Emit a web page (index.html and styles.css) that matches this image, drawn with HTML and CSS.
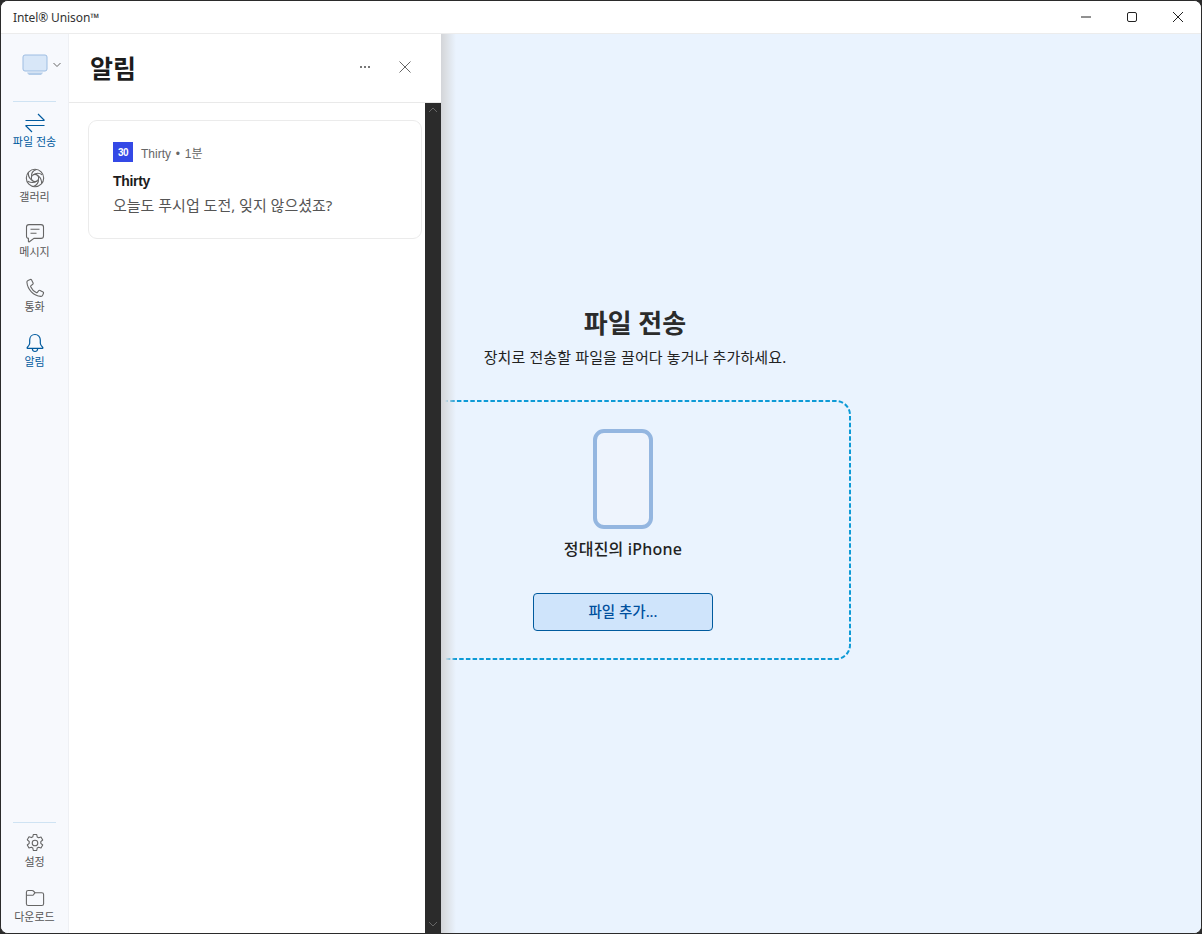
FILE: index.html
```html
<!DOCTYPE html>
<html lang="ko">
<head>
    <meta charset="UTF-8">
    <title>Intel® Unison™</title>
    <link rel="stylesheet" href="styles.css">
</head>
<body>
    <div class="window">
        <div class="titlebar">
            <span class="app-name">Intel® Unison™</span>
            <div class="win-controls">
                <button class="win-btn"><svg width="12" height="12" viewBox="0 0 12 12"><path d="M1 6h10" stroke="#222" fill="none"/></svg></button>
                <button class="win-btn"><svg width="12" height="12" viewBox="0 0 12 12"><rect x="1.5" y="1.5" width="9" height="9" rx="1.5" stroke="#222" fill="none"/></svg></button>
                <button class="win-btn"><svg width="12" height="12" viewBox="0 0 12 12"><path d="M1 1l10 10M11 1L1 11" stroke="#222" fill="none"/></svg></button>
            </div>
        </div>
        <div class="app-body">
            <nav class="rail">
                <div class="device-switch">
                    <svg width="26" height="22" viewBox="0 0 26 22">
                        <rect x="1" y="1" width="24" height="16" rx="2" fill="#d8e7f8" stroke="#9dbde2"/>
                        <path d="M5 18.500h16c-1 2-2 2.500-3 2.500H8c-1 0-2-.5-3-2.500z" fill="#b4cde9"/>
                    </svg>
                    <svg width="8" height="6" viewBox="0 0 8 6"><path d="M.5 1l3.500 3.500L7.500 1" stroke="#666" fill="none"/></svg>
                </div>
                <div class="rail-main">
                    <a class="rail-item active">
                        <svg width="22" height="20" viewBox="0 0 22 20" fill="none" stroke="#005a9e" stroke-width="1.200"><path d="M1.500 7.500h19M14 1l6.500 6.500M20.500 12.500h-19M8 19l-6.500-6.500"/></svg>
                        <span>파일 전송</span>
                    </a>
                    <a class="rail-item">
                        <svg width="20" height="20" viewBox="0 0 20 20" fill="none" stroke="#666" stroke-width="1.100"><circle cx="10" cy="10" r="8.700"/><circle cx="10" cy="10" r="3.600"/><path d="M6.500 9.200C6 5.500 8 2.500 11.500 1.400M8 6.900c3-2 6.500-2 9.200-.2M11.800 6.900c3 1.300 4.800 4.500 4.900 8.500M13.500 10.800c.2 3.600-1.800 6.500-5 7.800M12 13c-3 2-6.500 1.800-9.200.1M8.200 13.100c-3.200-1.400-5-4.300-5-8.500"/></svg>
                        <span>갤러리</span>
                    </a>
                    <a class="rail-item">
                        <svg width="20" height="20" viewBox="0 0 20 20" fill="none" stroke="#666" stroke-width="1.100"><path d="M4 1.600h12A2.500 2.500 0 0 1 18.500 4.100v8.800a2.500 2.500 0 0 1-2.500 2.500H9L4.400 18.800c-.5.300-1-.1-1-.6v-2.900A2 2 0 0 1 1.500 13V4.100A2.500 2.500 0 0 1 4 1.600z"/><path d="M5.500 6.300h9M5.500 10.300h6"/></svg>
                        <span>메시지</span>
                    </a>
                    <a class="rail-item">
                        <svg width="20" height="20" viewBox="0 0 20 20" fill="none" stroke="#666" stroke-width="1.100"><path d="M3 2.400 5.300 1.500c.5-.2 1 0 1.300.5l1.500 3c.2.500.1 1-.3 1.300L6 7.600c-.4.300-.5.800-.3 1.200 1.100 2.500 3 4.500 5.500 5.700.4.200.9.100 1.200-.2l1.300-1.600c.4-.4.900-.5 1.400-.3l2.900 1.500c.5.300.7.800.5 1.300l-.9 2.200c-.3.700-1 1.100-1.800 1C8.500 17.700 2.600 11.500 1.900 4.200 1.800 3.400 2.300 2.700 3 2.400z"/></svg>
                        <span>통화</span>
                    </a>
                    <a class="rail-item active">
                        <svg width="20" height="20" viewBox="0 0 20 20" fill="none" stroke="#005a9e" stroke-width="1.200"><path d="M10 1.500c-3.200 0-5.300 2.400-5.300 5.400v3.300c0 1.500-1.500 3.200-2.500 4.300-.3.300-.1.800.3.800h15c.4 0 .6-.5.300-.8-1-1.100-2.500-2.800-2.500-4.300V6.900c0-3-2.100-5.400-5.300-5.400z"/><path d="M7.300 15.800c.2 1.600 1.300 2.700 2.700 2.700s2.500-1.100 2.700-2.700"/></svg>
                        <span>알림</span>
                    </a>
                </div>
                <div class="rail-bottom">
                    <a class="rail-item">
                        <svg width="20" height="20" viewBox="0 0 20 20" fill="none" stroke="#666" stroke-width="1.100"><circle cx="10" cy="10" r="2.800"/><path d="M8.300 1.500h3.400l.5 2.500 1.400.8 2.400-.8 1.700 3-1.900 1.700v1.600l1.900 1.700-1.700 3-2.400-.8-1.400.8-.5 2.500H8.300l-.5-2.500-1.400-.8-2.400.8-1.700-3 1.900-1.700V8.500L2.300 6.800l1.700-3 2.400.8 1.400-.8z" stroke-linejoin="round"/></svg>
                        <span>설정</span>
                    </a>
                    <a class="rail-item">
                        <svg width="20" height="20" viewBox="0 0 20 20" fill="none" stroke="#666" stroke-width="1.100"><path d="M3.200 2.500h4c.5 0 .9.200 1.200.5L10 4.700h6.800c1 0 1.800.8 1.800 1.800v9.200c0 1-.8 1.800-1.800 1.800H3.200c-1 0-1.800-.8-1.800-1.800V4.300c0-1 .8-1.800 1.800-1.800z"/><path d="M1.400 7.300h5.800c.5 0 .9-.2 1.200-.5L10 4.700"/></svg>
                        <span>다운로드</span>
                    </a>
                </div>
            </nav>
            <div class="content">
                <main class="transfer">
                    <h1 class="transfer-title">파일 전송</h1>
                    <p class="transfer-sub">장치로 전송할 파일을 끌어다 놓거나 추가하세요.</p>
                    <div class="dropzone">
                        <svg class="dropzone-line" width="456" height="260" viewBox="0 0 456 260"><rect x="1" y="1" width="454" height="258" rx="14" fill="none" stroke="#0d9ad6" stroke-width="2" stroke-dasharray="4.500 2.200"/></svg>
                        <div class="phone"></div>
                        <div class="phone-name">정대진의 iPhone</div>
                        <button class="add-file">파일 추가...</button>
                    </div>
                </main>
                <aside class="panel">
                    <header class="panel-head">
                        <h2>알림</h2>
                        <div class="panel-actions">
                            <svg width="12" height="4" viewBox="0 0 12 4"><g fill="#777"><rect x="1" y="1" width="2" height="2"/><rect x="5" y="1" width="2" height="2"/><rect x="9" y="1" width="2" height="2"/></g></svg>
                            <svg width="12" height="12" viewBox="0 0 12 12"><path d="M.5.500l11 11M11.500.500l-11 11" stroke="#666" fill="none"/></svg>
                        </div>
                    </header>
                    <div class="panel-body">
                        <div class="panel-list">
                            <article class="card">
                                <div class="card-app">
                                    <span class="app-logo">30</span>
                                    <span>Thirty • 1분</span>
                                </div>
                                <div class="card-title">Thirty</div>
                                <div class="card-text">오늘도 푸시업 도전, 잊지 않으셨죠?</div>
                            </article>
                        </div>
                        <div class="scrollbar">
                            <svg width="10" height="6" viewBox="0 0 10 6"><path d="M1 5l4-4 4 4" stroke="#666" fill="none"/></svg>
                            <svg width="10" height="6" viewBox="0 0 10 6"><path d="M1 1l4 4 4-4" stroke="#666" fill="none"/></svg>
                        </div>
                    </div>
                </aside>
            </div>
        </div>
    </div>
</body>
</html>
```

FILE: styles.css
```css
html, body {
    height: 100%;
    margin: 0;
    background: #2b2b2b;
}
body {
    font-family: "Noto Sans", "Noto Sans CJK KR", sans-serif;
    color: #1f1f1f;
    overflow: hidden;
}
.window {
    box-sizing: border-box;
    height: 934px;
    border: 1px solid #2b2b2b;
    border-radius: 8px;
    overflow: hidden;
    background: #fff;
    display: flex;
    flex-direction: column;
}
.titlebar {
    height: 32px;
    flex: none;
    display: flex;
    align-items: center;
    justify-content: space-between;
    border-bottom: 1px solid #ececec;
    background: #fff;
}
.app-name {
    font-size: 12px;
    margin-left: 12px;
    color: #333;
    letter-spacing: -.1px;
}
.win-controls {
    display: flex;
    height: 100%;
}
.win-btn {
    width: 46px;
    border: none;
    background: none;
    padding: 0;
    display: flex;
    align-items: center;
    justify-content: center;
}
.app-body {
    flex: 1;
    display: flex;
    min-height: 0;
}
.rail {
    width: 67px;
    flex: none;
    display: flex;
    flex-direction: column;
    background: #f7f9fd;
    border-right: 1px solid #eef0f4;
}
.device-switch {
    height: 68px;
    flex: none;
    box-sizing: border-box;
    display: flex;
    align-items: center;
    justify-content: center;
    gap: 5px;
    padding: 0 0 7px 14px;
    position: relative;
}
.device-switch::after, .rail-bottom::before {
    content: "";
    display: block;
    height: 1px;
    background: #cfe3f3;
    margin: 0 12px;
}
.device-switch::after {
    position: absolute;
    left: 0;
    right: 0;
    bottom: 0;
}
.rail-main {
    flex: 1;
    padding-top: 9px;
}
.rail-item {
    display: flex;
    flex-direction: column;
    align-items: center;
    height: 55px;
    padding-top: 2px;
    box-sizing: border-box;
    color: #555;
    font-size: 11px;
    line-height: 14px;
}
.rail-item svg {
    height: 20px;
    margin-bottom: 2px;
}
.rail-item.active {
    color: #005a9e;
}
.rail-bottom {
    flex: none;
}
.rail-bottom::before {
    margin-bottom: 8px;
}
.rail-bottom .rail-item:last-child {
    height: 47px;
}
.content {
    flex: 1;
    position: relative;
    background: #eaf3fe;
    display: flex;
    min-width: 0;
}
.transfer {
    flex: 1;
    display: flex;
    flex-direction: column;
    align-items: center;
    justify-content: center;
}
.transfer-title {
    margin: 0;
    font-size: 26px;
    line-height: 32px;
    font-weight: 700;
    color: #2b2b2b;
}
.transfer-sub {
    margin: 8px 0 33px;
    font-size: 15px;
    line-height: 20px;
    color: #222;
    letter-spacing: .12px;
}
.dropzone {
    box-sizing: border-box;
    width: 456px;
    height: 260px;
    margin-right: 24px;
    position: relative;
    display: flex;
    flex-direction: column;
    align-items: center;
    padding-top: 29px;
}
.dropzone-line {
    position: absolute;
    left: 0;
    top: 0;
}
.phone {
    box-sizing: border-box;
    width: 60px;
    height: 100px;
    border: 4px solid #94b6e0;
    border-radius: 11px;
    background: #eef4fd;
}
.phone-name {
    margin-top: 10px;
    font-size: 16px;
    line-height: 20px;
    font-weight: 500;
    color: #222;
    letter-spacing: .2px;
}
.add-file {
    margin-top: 34px;
    width: 180px;
    height: 38px;
    padding: 0 0 3px;
    border: 1px solid #005a9e;
    border-radius: 4px;
    background: #cfe4fb;
    color: #00509e;
    font-family: inherit;
    font-size: 14.500px;
    font-weight: 500;
}
.panel {
    position: absolute;
    left: 0;
    top: 0;
    bottom: 0;
    width: 372px;
    background: #fff;
    display: flex;
    flex-direction: column;
}
.panel::after {
    content: "";
    position: absolute;
    left: 100%;
    top: 0;
    bottom: 0;
    width: 15px;
    background: linear-gradient(to right, #d3d5d9, #dadde1 4px, rgba(234, 243, 254, 0));
}
.panel-head {
    height: 69px;
    flex: none;
    box-sizing: border-box;
    display: flex;
    align-items: center;
    justify-content: space-between;
    padding: 0 30px 3px 21px;
    border-bottom: 1px solid #e9e9e9;
}
.panel-head h2 {
    margin: 0;
    font-size: 25px;
    font-weight: 700;
    color: #1c1c1c;
}
.panel-actions {
    display: flex;
    align-items: center;
    gap: 28px;
}
.panel-body {
    flex: 1;
    display: flex;
    min-height: 0;
}
.panel-list {
    flex: 1;
    padding: 17px 3px 0 19px;
}
.scrollbar {
    width: 16px;
    background: #2b2b2b;
    display: flex;
    flex-direction: column;
    align-items: center;
    justify-content: space-between;
    padding: 4px 0 6px;
    box-sizing: border-box;
}
.card {
    box-sizing: border-box;
    height: 119px;
    border: 1px solid #ebebeb;
    border-radius: 9px;
    padding: 21px 24px 0;
}
.card-app {
    display: flex;
    align-items: center;
    gap: 8px;
    font-family: "Liberation Sans", "Noto Sans CJK KR", sans-serif;
    font-size: 12px;
    color: #666;
    height: 20px;
    word-spacing: 1.500px;
}
.app-logo {
    width: 20px;
    height: 20px;
    background: #3449e6;
    color: #fff;
    font-size: 10px;
    font-weight: 700;
    display: flex;
    align-items: center;
    justify-content: center;
    letter-spacing: -.5px;
}
.card-title {
    margin-top: 9px;
    font-family: "Liberation Sans", sans-serif;
    font-size: 14px;
    line-height: 20px;
    font-weight: 700;
    color: #1c1c1c;
    letter-spacing: -.3px;
}
.card-text {
    margin-top: 4px;
    font-size: 15px;
    line-height: 20px;
    color: #555;
}
```
